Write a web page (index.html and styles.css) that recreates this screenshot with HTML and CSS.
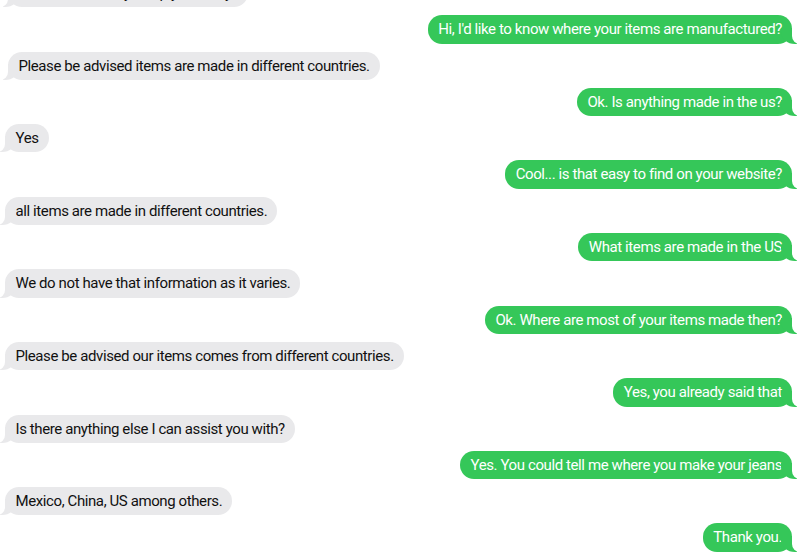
FILE: index.html
```html
<!DOCTYPE html>
<html>
<head>
<meta charset="utf-8">
<link rel="stylesheet" href="styles.css">
</head>
<body>
<div class="chat">
  <div class="msg in shift">Hi there, how may I help you today?</div>
  <div class="msg out">Hi, I'd like to know where your items are manufactured?</div>
  <div class="msg in shift">Please be advised items are made in different countries.</div>
  <div class="msg out">Ok. Is anything made in the us?</div>
  <div class="msg in">Yes</div>
  <div class="msg out">Cool... is that easy to find on your website?</div>
  <div class="msg in">all items are made in different countries.</div>
  <div class="msg out">What items are made in the US</div>
  <div class="msg in">We do not have that information as it varies.</div>
  <div class="msg out">Ok. Where are most of your items made then?</div>
  <div class="msg in">Please be advised our items comes from different countries.</div>
  <div class="msg out">Yes, you already said that</div>
  <div class="msg in">Is there anything else I can assist you with?</div>
  <div class="msg out">Yes. You could tell me where you make your jeans</div>
  <div class="msg in">Mexico, China, US among others.</div>
  <div class="msg out">Thank you.</div>
</div>
</body>
</html>
```
FILE: styles.css
```css
html, body {
  margin: 0;
  padding: 0;
  background: #ffffff;
  overflow: hidden;
}
.chat {
  display: flex;
  flex-direction: column;
  gap: 8px;
  margin-top: -21px;
  padding: 0 8px 0 5px;
  font-family: Roboto, "Noto Sans", sans-serif;
  font-size: 15px;
  letter-spacing: -0.4px;
}
.msg {
  position: relative;
  box-sizing: border-box;
  height: 28.3px;
  line-height: 18px;
  padding: 5px 10px 5px 10.5px;
  border-radius: 14px;
  white-space: nowrap;
  max-width: 90%;
}
.in {
  align-self: flex-start;
  background: #e9e9eb;
  color: #111111;
}
.in.shift {
  margin-left: 3px;
}
.out {
  align-self: flex-end;
  background: #35c759;
  color: #ffffff;
}
.msg::before,
.msg::after {
  content: "";
  position: absolute;
  bottom: 0;
  height: 16px;
}
.out::before {
  right: -5px;
  width: 16px;
  background: #35c759;
  border-bottom-left-radius: 14px 12px;
}
.out::after {
  right: -20px;
  width: 20px;
  background: #ffffff;
  border-bottom-left-radius: 8px;
}
.in::before {
  left: -5px;
  width: 16px;
  background: #e9e9eb;
  border-bottom-right-radius: 14px 12px;
}
.in::after {
  left: -20px;
  width: 20px;
  background: #ffffff;
  border-bottom-right-radius: 8px;
}
```
